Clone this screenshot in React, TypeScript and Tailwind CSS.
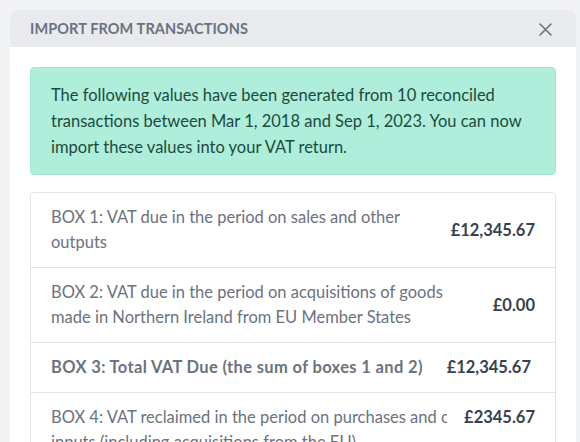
import React from "react";

const rows = [
  {
    label: "BOX 1: VAT due in the period on sales and other outputs",
    amount: "£12,345.67",
  },
  {
    label:
      "BOX 2: VAT due in the period on acquisitions of goods made in Northern Ireland from EU Member States",
    amount: "£0.00",
  },
];

export default function App() {
  return (
    <div
      className="h-[442px] w-[580px] overflow-hidden bg-[#f2f3f5] pl-[10px] pt-[10px]"
      style={{ fontFamily: "Lato, 'Noto Sans', sans-serif" }}
    >
      <div className="w-[566px] h-[440px] rounded-t-lg bg-white overflow-hidden">
        <div className="flex h-[37px] items-center justify-between bg-[#e9eaee] pl-5 pr-[24px]">
          <div className="text-[14.5px] font-bold tracking-[0.1px] text-[#6b7280]">IMPORT FROM TRANSACTIONS</div>
          <svg width="13" height="13" viewBox="0 0 13 13" className="mt-[2px]">
            <path d="M1 1L12 12M12 1L1 12" stroke="#6b7280" strokeWidth="1.6" strokeLinecap="round" />
          </svg>
        </div>
        <div className="px-5 pt-5">
          <div className="rounded-[4px] border border-[#a5e8d2] bg-[#aeeedb] px-5 py-[14px] text-[16.5px] leading-[26px] text-[#1c4b3d]">
            The following values have been generated from 10 reconciled transactions between Mar 1, 2018 and Sep 1, 2023. You can now import these values into your VAT return.
          </div>
          <div className="mt-[17px] rounded-[4px] border border-[#e2e4e8]">
            {rows.map((r, i) => (
              <div
                key={i}
                className="flex items-center justify-between border-b border-[#e2e4e8] px-5 py-3"
              >
                <div className="w-[396px] text-[16.5px] leading-[25px] text-[#6b7280]">{r.label}</div>
                <div className="text-[16.5px] font-bold text-[#374151]">{r.amount}</div>
              </div>
            ))}
            <div className="flex items-center justify-between border-b border-[#e2e4e8] pl-5 pr-6 py-3">
              <div className="text-[16.5px] font-bold leading-[25px] tracking-[0.35px] text-[#6b7280]">
                BOX 3: Total VAT Due (the sum of boxes 1 and 2)
              </div>
              <div className="text-[16.5px] font-bold text-[#374151]">£12,345.67</div>
            </div>
            <div className="flex items-start justify-between px-5 pt-3">
              <div className="w-[396px] overflow-hidden text-[16.5px] leading-[25px] text-[#6b7280]">
                <div className="whitespace-nowrap">BOX 4: VAT reclaimed in the period on purchases and other</div>
                <div className="whitespace-nowrap">inputs (including acquisitions from the EU)</div>
              </div>
              <div className="text-[16.5px] font-bold leading-[25px] text-[#374151]">£2345.67</div>
            </div>
          </div>
        </div>
      </div>
    </div>
  );
}
